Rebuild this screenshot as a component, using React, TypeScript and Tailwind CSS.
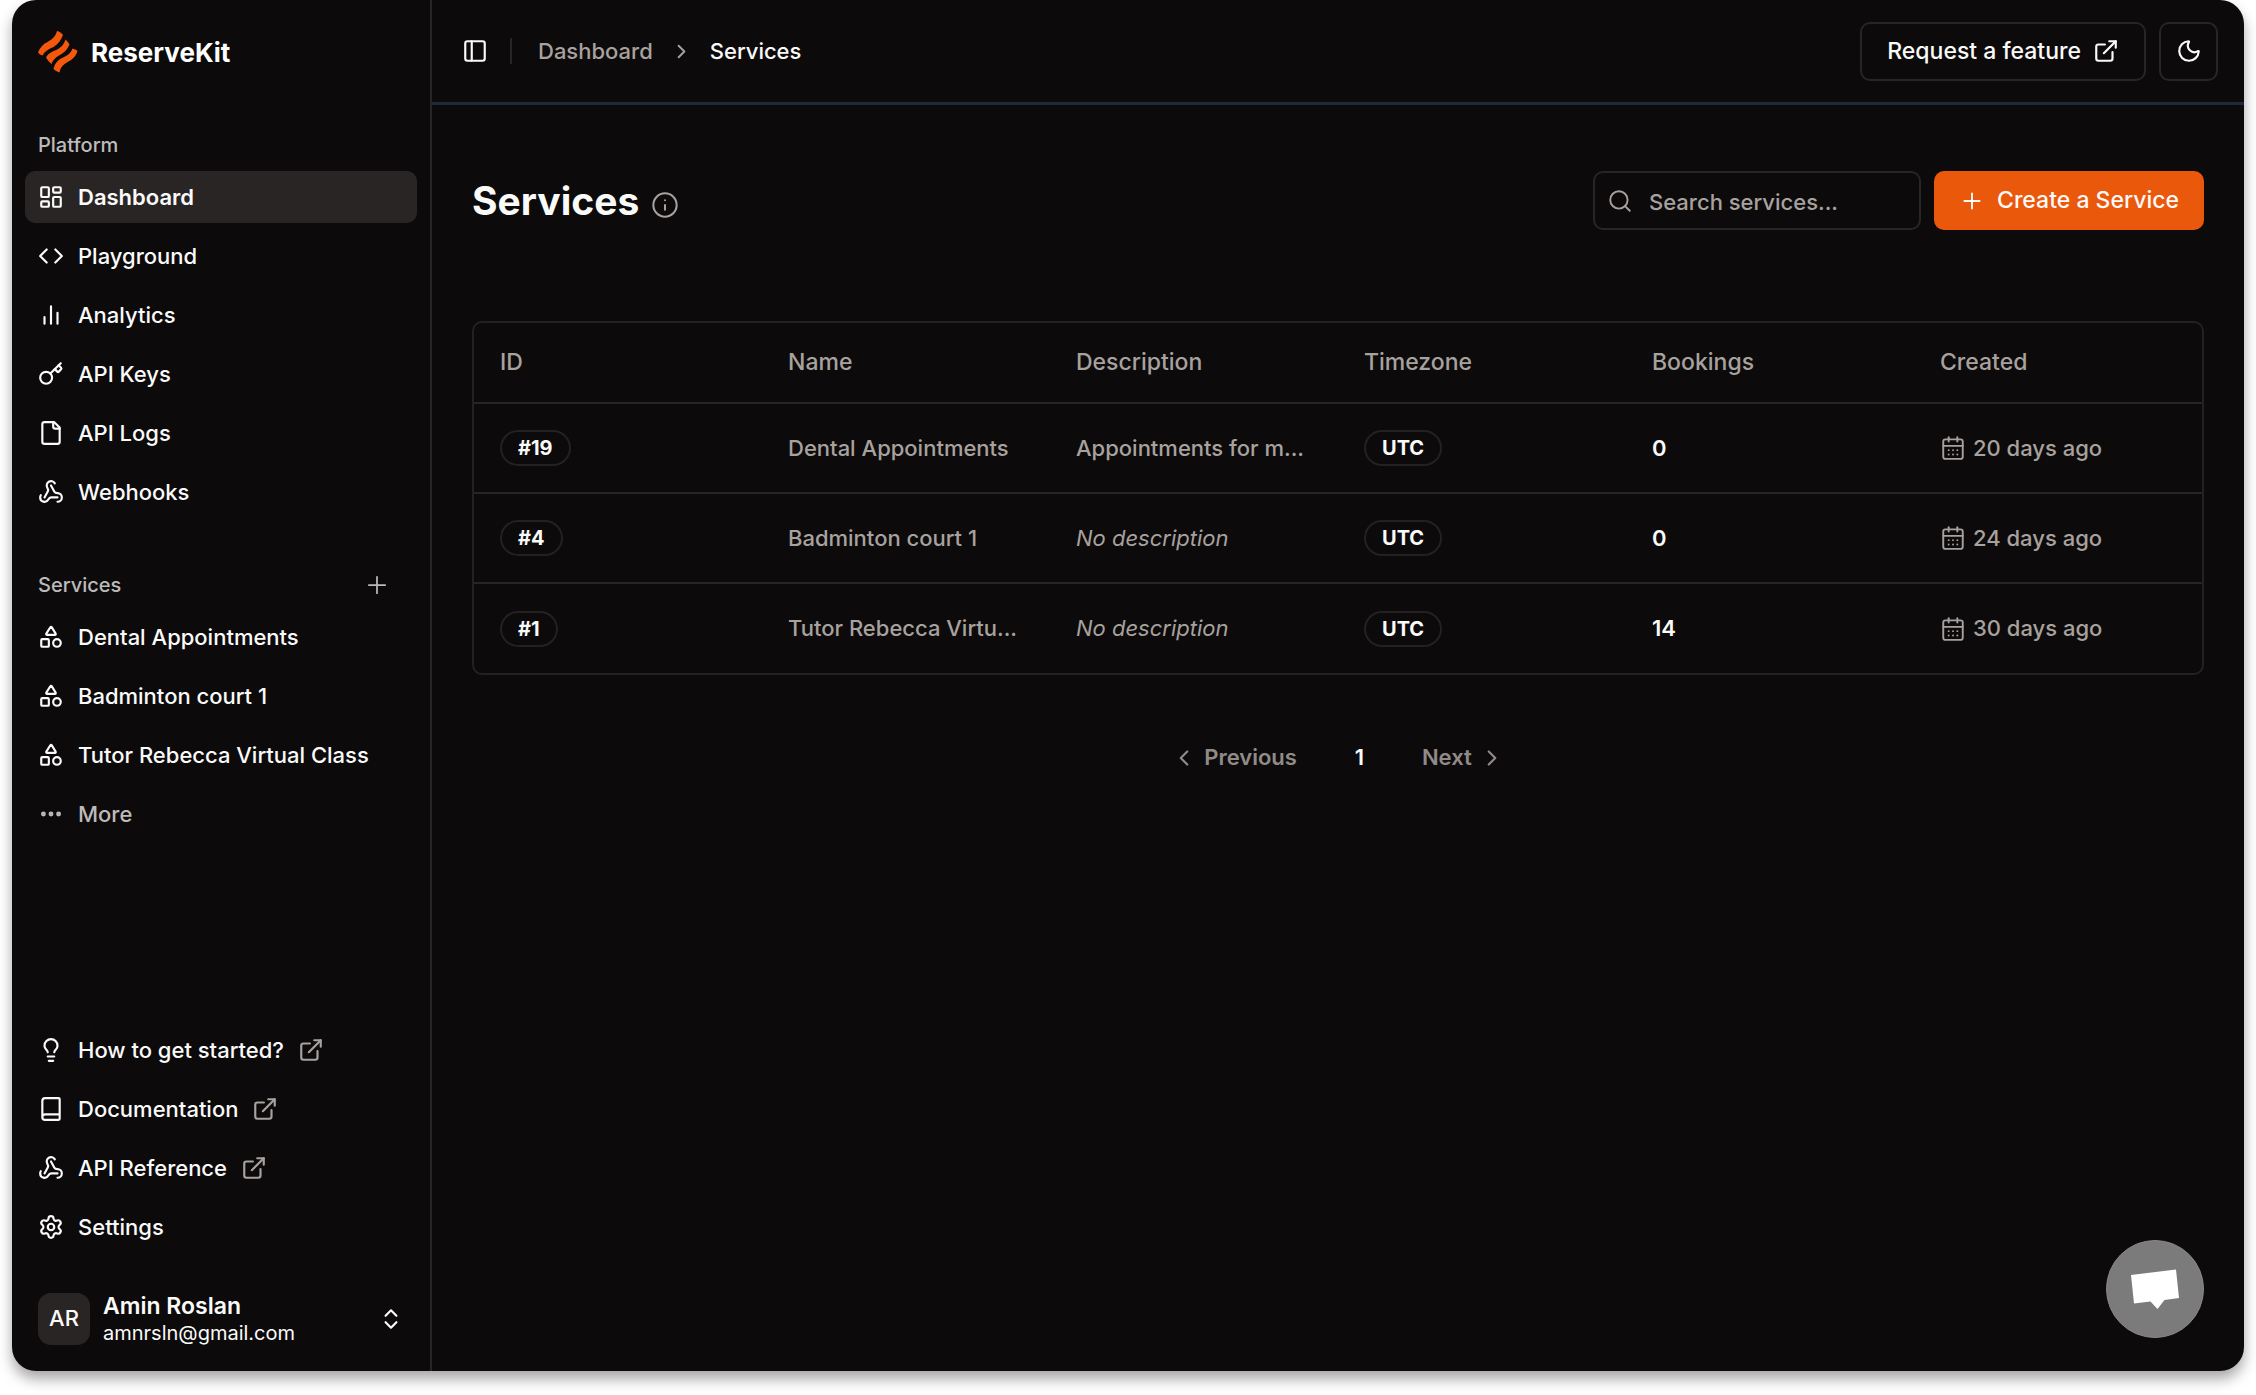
import type { ReactNode } from "react";
import {
  Book,
  CalendarDays,
  ChevronLeft,
  ChevronRight,
  ChevronsUpDown,
  Code,
  Ellipsis,
  ExternalLink,
  Info,
  Key,
  LayoutDashboard,
  Lightbulb,
  Moon,
  PanelLeft,
  Plus,
  Search,
  Settings,
  Shapes,
  Webhook,
} from "lucide-react";

const icon = "size-[26px] shrink-0";

function BarsIcon() {
  return (
    <svg viewBox="0 0 24 24" fill="none" stroke="currentColor" strokeWidth={2} strokeLinecap="round" className={icon} aria-hidden="true">
      <path d="M18 20V10M12 20V4M6 20v-6" />
    </svg>
  );
}

function FileIcon() {
  return (
    <svg viewBox="0 0 24 24" fill="none" stroke="currentColor" strokeWidth={2} strokeLinecap="round" strokeLinejoin="round" className={icon} aria-hidden="true">
      <path d="M15 2H6a2 2 0 0 0-2 2v16a2 2 0 0 0 2 2h12a2 2 0 0 0 2-2V7Z" />
      <path d="M14 2v4a2 2 0 0 0 2 2h4" />
    </svg>
  );
}

function Logo() {
  return (
    <svg viewBox="0 0 40 42" className="h-[42px] w-10 shrink-0" fill="#f4580d" aria-hidden="true">
      <path d="M19 0C21.500 0.500 23.500 2 25 4C23 9 20.500 13 15.500 16C10 18.500 6.500 20.500 4.500 24.500C3 24 1.200 23 0 21.500C2 16.500 5 13 9.500 11C15 8 17.500 5 19 0Z" />
      <path d="M27.500 8.500C29 10 30.500 11.500 31.500 13.500C29 19 26 22 21 24.500C17 27 15 29 13.500 33C11 31 9.500 29 8 26.500C10 23 12 21.500 17 19.500C23 17 25.500 14 27.500 8.500Z" />
      <path d="M34.500 17.500C36.500 18 38 18.500 39.500 20C38 24.500 35.500 28 30.500 30.500C25 33.500 22.500 36.500 21.500 41.500C19 40.500 17 39.500 15.500 38C17 32.500 19 29.500 24 27C30 24.500 33 22 34.500 17.500Z" />
    </svg>
  );
}

function NavItem({
  glyph,
  label,
  active = false,
  external = false,
  muted = false,
}: {
  glyph: ReactNode;
  label: string;
  active?: boolean;
  external?: boolean;
  muted?: boolean;
}) {
  return (
    <li>
      <a
        href="#"
        aria-current={active ? "page" : undefined}
        className={`flex h-[52px] items-center gap-[14px] rounded-[10px] px-[13px] text-[22px] ${active ? "bg-[#2a2525] font-semibold" : "font-[450]"} ${muted ? "text-[#bdbbba]" : "text-[#fafaf9]"}`}
      >
        {glyph}
        <span className="truncate">{label}</span>
        {external && <ExternalLink className="size-[26px] shrink-0 text-[#a8a29e]" />}
      </a>
    </li>
  );
}

function Badge({ children }: { children: ReactNode }) {
  return (
    <span className="inline-flex h-9 items-center rounded-full border-2 border-[#242122] px-4 text-[20px] font-bold text-[#fafaf9]">
      {children}
    </span>
  );
}

const columns = ["ID", "Name", "Description", "Timezone", "Bookings", "Created"];

const services = [
  { id: "#19", name: "Dental Appointments", description: "Appointments for m...", bookings: 0, created: "20 days ago" },
  { id: "#4", name: "Badminton court 1", description: "", bookings: 0, created: "24 days ago" },
  { id: "#1", name: "Tutor Rebecca Virtu...", description: "", bookings: 14, created: "30 days ago" },
];

function Sidebar() {
  return (
    <aside className="flex w-[420px] shrink-0 flex-col border-r-2 border-[#292526] px-[13px] pb-[13px]">
      <a href="#" className="flex h-[104px] items-center gap-[13px] px-[13px] text-[26px] font-bold text-white">
        <Logo />
        ReserveKit
      </a>

      <nav aria-label="Platform" className="pt-[15px]">
        <h2 className="flex h-[52px] items-center px-[13px] text-[20px] font-medium text-[#bdbbba]">Platform</h2>
        <ul className="flex flex-col gap-[7px]">
          <NavItem glyph={<LayoutDashboard className={icon} />} label="Dashboard" active />
          <NavItem glyph={<Code className={icon} />} label="Playground" />
          <NavItem glyph={<BarsIcon />} label="Analytics" />
          <NavItem glyph={<Key className={icon} />} label="API Keys" />
          <NavItem glyph={<FileIcon />} label="API Logs" />
          <NavItem glyph={<Webhook className={icon} />} label="Webhooks" />
        </ul>
      </nav>

      <nav aria-label="Services" className="pt-[41px]">
        <div className="flex h-[52px] items-center justify-between pl-[13px] pr-[26px] text-[#bdbbba]">
          <h2 className="text-[20px] font-medium">Services</h2>
          <button type="button" aria-label="Add service">
            <Plus strokeWidth={1.5} className="size-7" />
          </button>
        </div>
        <ul className="flex flex-col gap-[7px]">
          <NavItem glyph={<Shapes className={icon} />} label="Dental Appointments" />
          <NavItem glyph={<Shapes className={icon} />} label="Badminton court 1" />
          <NavItem glyph={<Shapes className={icon} />} label="Tutor Rebecca Virtual Class" />
          <NavItem glyph={<Ellipsis strokeWidth={2.5} className={icon} />} label="More" muted />
        </ul>
      </nav>

      <nav aria-label="Help" className="mt-auto">
        <ul className="flex flex-col gap-[7px]">
          <NavItem glyph={<Lightbulb className={icon} />} label="How to get started?" external />
          <NavItem glyph={<Book className={icon} />} label="Documentation" external />
          <NavItem glyph={<Webhook className={icon} />} label="API Reference" external />
          <NavItem glyph={<Settings className={icon} />} label="Settings" />
        </ul>
      </nav>

      <button type="button" className="mt-[26px] flex h-[79px] items-center gap-[13px] px-[13px] text-left text-[#fafaf9]">
        <span className="flex size-[52px] items-center justify-center rounded-[13px] bg-[#2a2525] text-[22px] font-[450]">AR</span>
        <span className="flex flex-1 flex-col">
          <span className="text-[23px] leading-[28px] font-semibold">Amin Roslan</span>
          <span className="text-[20px] leading-[26px]">amnrsln@gmail.com</span>
        </span>
        <ChevronsUpDown className={icon} />
      </button>
    </aside>
  );
}

function TopBar() {
  return (
    <header className="flex h-[105px] items-center justify-between border-b-[3px] border-[#1e293b] pl-[30px] pr-[26px]">
      <div className="flex items-center">
        <button type="button" aria-label="Toggle sidebar">
          <PanelLeft className={icon} />
        </button>
        <div className="ml-[22px] h-[26px] w-[2px] bg-[#292524]" />
        <nav aria-label="Breadcrumb" className="ml-[26px] flex items-center gap-[17px] text-[22px] font-[450]">
          <a href="#" className="text-[#a8a29e]">Dashboard</a>
          <ChevronRight className="size-[23px] text-[#a8a29e]" />
          <span aria-current="page">Services</span>
        </nav>
      </div>
      <div className="flex gap-[13px]">
        <button type="button" className="flex h-[59px] items-center gap-3 rounded-[10px] border-2 border-[#292524] px-[25px] text-[23px] font-medium">
          Request a feature
          <ExternalLink className={icon} />
        </button>
        <button type="button" aria-label="Toggle theme" className="flex size-[59px] items-center justify-center rounded-[10px] border-2 border-[#292524]">
          <Moon className={icon} />
        </button>
      </div>
    </header>
  );
}

function ServicesTable() {
  return (
    <div className="mt-[91px] overflow-hidden rounded-[10px] border-2 border-[#242122]">
      <table className="w-full table-fixed text-left text-[22px] font-[450]">
        <thead>
          <tr className="h-20 border-b-2 border-[#292526] text-[23px] text-[#a8a29e]">
            {columns.map((column) => (
              <th key={column} scope="col" className="px-[26px] font-medium">
                {column}
              </th>
            ))}
          </tr>
        </thead>
        <tbody>
          {services.map((service) => (
            <tr key={service.id} className="h-[90px] border-b-2 border-[#292526] text-[#a8a29e] last:border-b-0">
              <td className="px-[26px]">
                <Badge>{service.id}</Badge>
              </td>
              <td className="px-[26px] whitespace-nowrap">{service.name}</td>
              <td className="px-[26px] whitespace-nowrap">
                {service.description || <em>No description</em>}
              </td>
              <td className="px-[26px]">
                <Badge>UTC</Badge>
              </td>
              <td className="px-[26px] font-semibold text-[#fafaf9]">{service.bookings}</td>
              <td className="px-[26px]">
                <span className="flex items-center gap-[7px] whitespace-nowrap">
                  <CalendarDays strokeWidth={1.75} className={icon} />
                  {service.created}
                </span>
              </td>
            </tr>
          ))}
        </tbody>
      </table>
    </div>
  );
}

export default function App() {
  return (
    <div className="min-h-screen bg-white px-3 pb-6 font-['Inter',sans-serif]">
      <div className="relative flex min-h-[calc(100vh-24px)] rounded-[24px] bg-[#0c0a0b] text-[#fafaf9] shadow-[0_8px_14px_rgba(0,0,0,0.35)]">
        <Sidebar />
        <div className="flex min-w-0 flex-1 flex-col">
          <TopBar />
          <main className="px-10 pt-[66px]">
            <div className="flex items-center justify-between">
              <div className="flex items-center gap-3">
                <h1 className="text-[39px] leading-[59px] font-bold">Services</h1>
                <button type="button" aria-label="About services" className="pt-2 text-[#a8a29e]">
                  <Info strokeWidth={1.75} className="size-7" />
                </button>
              </div>
              <div className="flex gap-[13px]">
                <div className="flex h-[59px] w-[328px] items-center gap-4 rounded-[10px] border-2 border-[#292524] px-3">
                  <Search strokeWidth={1.75} className="size-[26px] shrink-0 text-[#a8a29e]" />
                  <input
                    type="search"
                    aria-label="Search services"
                    placeholder="Search services..."
                    className="h-full w-full min-w-0 bg-transparent pt-[2px] text-[22px] font-[450] outline-none placeholder:text-[#a8a29e]"
                  />
                </div>
                <button type="button" className="flex h-[59px] items-center gap-3 rounded-[10px] bg-[#ea580c] px-[25px] text-[23px] font-medium">
                  <Plus strokeWidth={1.75} className={icon} />
                  Create a Service
                </button>
              </div>
            </div>
            <ServicesTable />
            <nav aria-label="Pagination" className="mt-[53px] flex items-center justify-center gap-[7px] text-[22px] font-semibold text-[#918b88]">
              <button type="button" className="flex h-[59px] items-center gap-[7px] pl-4 pr-[26px]">
                <ChevronLeft className={icon} />
                Previous
              </button>
              <button type="button" aria-current="page" className="size-[59px] text-[#fafaf9]">
                1
              </button>
              <button type="button" className="flex h-[59px] items-center gap-[7px] pl-[26px] pr-4">
                Next
                <ChevronRight className={icon} />
              </button>
            </nav>
          </main>
        </div>
        <button
          type="button"
          aria-label="Open chat"
          className="absolute right-10 bottom-[33px] flex size-[98px] items-center justify-center rounded-full border border-[#8b8788] bg-[#7b7b7b]"
        >
          <svg viewBox="0 0 48 40" className="h-10 w-12" fill="#fff" aria-hidden="true">
            <path d="M0 6L45 0.500L48 29L33.500 31L26.500 40L19.500 32.500L3 34.500Z" />
          </svg>
        </button>
      </div>
    </div>
  );
}
